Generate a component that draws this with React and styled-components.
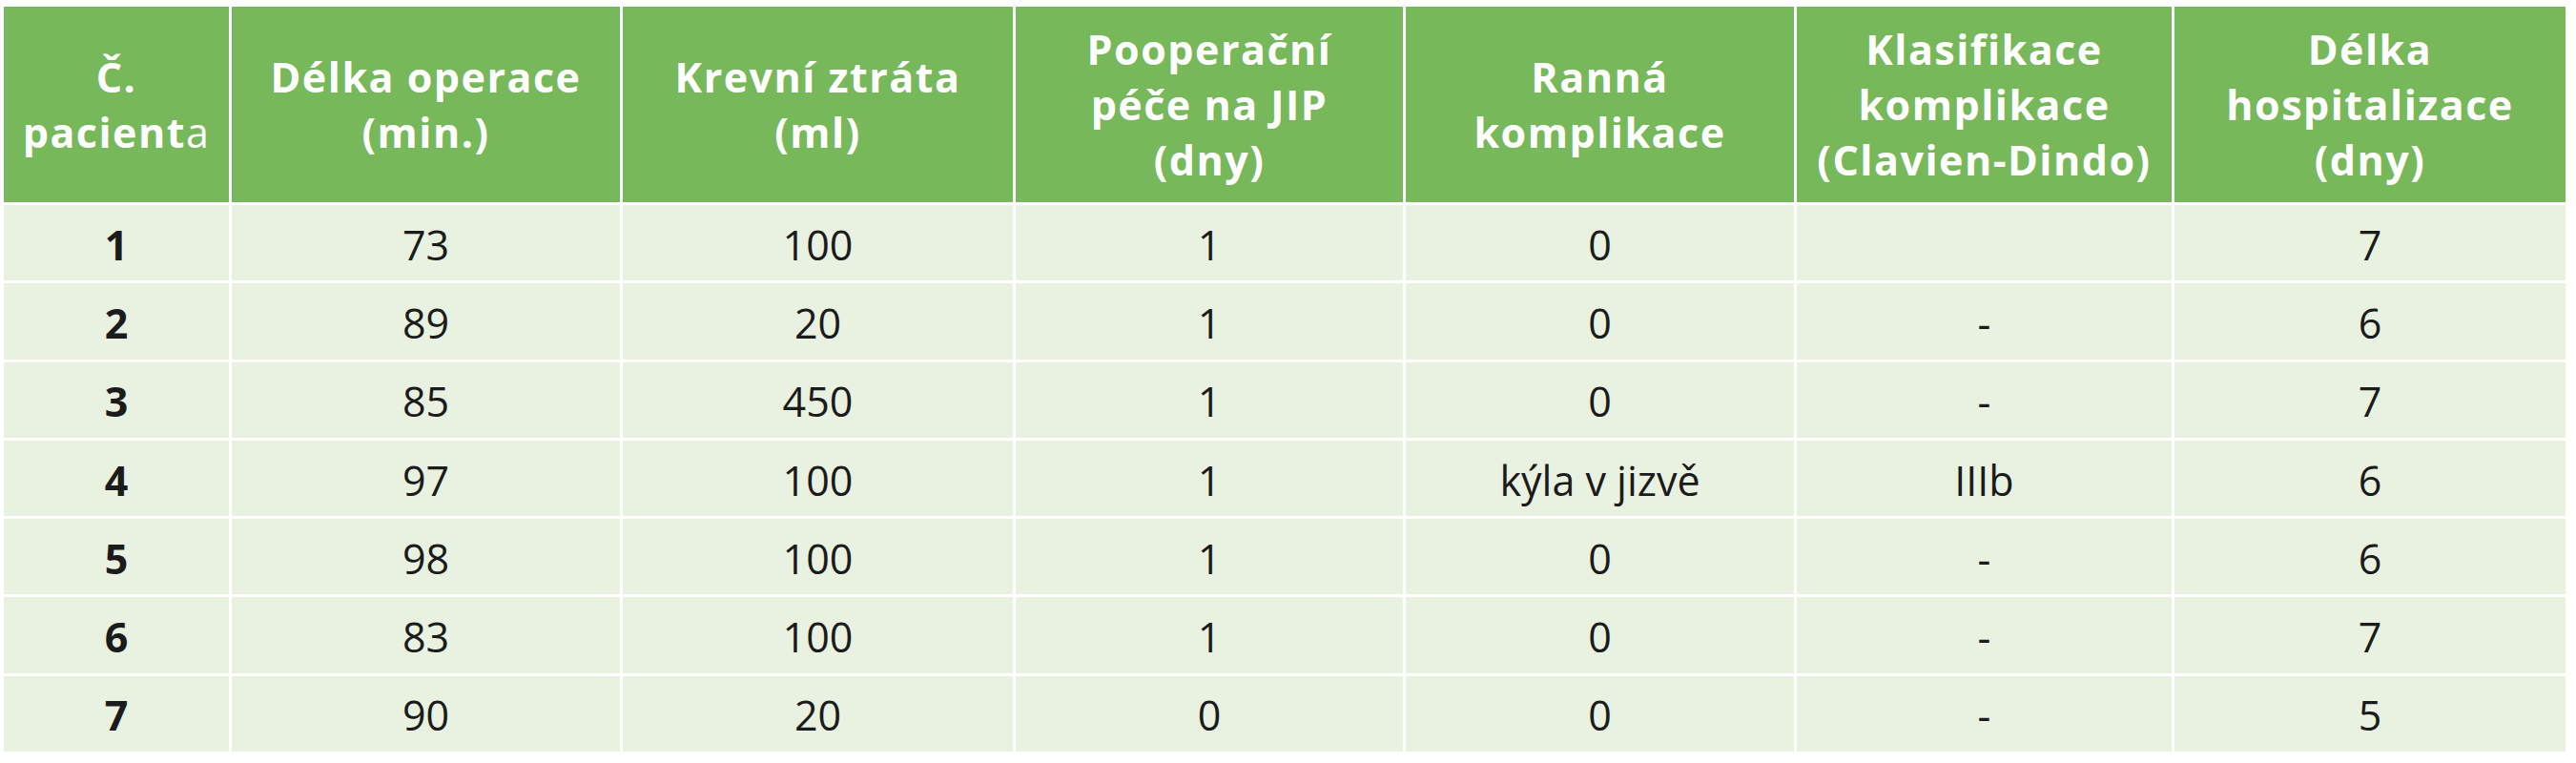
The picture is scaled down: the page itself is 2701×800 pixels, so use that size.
import React from 'react';
import styled, { createGlobalStyle } from 'styled-components';

const GlobalStyle = createGlobalStyle`
  body {
    margin: 0;
    background: #ffffff;
    font-family: "Open Sans", "Noto Sans", sans-serif;
  }
`;

const Page = styled.div`
  padding: 7px 11px 0 4px;
`;

const Table = styled.div`
  display: grid;
  grid-template-columns: 236px 407px 409px 406px 407px 393px 410px;
  grid-template-rows: 205px;
  grid-auto-rows: 79.3px;
  gap: 3px;
  background: #ffffff;
`;

const HeadCell = styled.div`
  background: #77b85b;
  color: #ffffff;
  font-weight: 700;
  font-size: 43px;
  letter-spacing: 1.5px;
  line-height: 58px;
  text-align: center;
  display: flex;
  align-items: center;
  justify-content: center;
`;

const Light = styled.span`
  font-weight: 400;
`;

const Cell = styled.div`
  background: #e9f2e1;
  color: #1b1b1b;
  font-size: 43px;
  font-weight: ${(p) => (p.$bold ? 700 : 400)};
  display: flex;
  align-items: center;
  justify-content: center;
  padding-top: 3px;
  white-space: nowrap;
`;

const headers = [
  [<>Č.</>, <>pacient<Light>a</Light></>],
  ['Délka operace', '(min.)'],
  ['Krevní ztráta', '(ml)'],
  ['Pooperační', 'péče na JIP', '(dny)'],
  ['Ranná', 'komplikace'],
  ['Klasifikace', 'komplikace', '(Clavien-Dindo)'],
  ['Délka', 'hospitalizace', '(dny)'],
];

const rows = [
  ['1', '73', '100', '1', '0', '', '7'],
  ['2', '89', '20', '1', '0', '-', '6'],
  ['3', '85', '450', '1', '0', '-', '7'],
  ['4', '97', '100', '1', 'kýla v jizvě', 'IIIb', '6'],
  ['5', '98', '100', '1', '0', '-', '6'],
  ['6', '83', '100', '1', '0', '-', '7'],
  ['7', '90', '20', '0', '0', '-', '5'],
];

export default function App() {
  return (
    <Page>
      <GlobalStyle />
      <Table>
        {headers.map((lines, i) => (
          <HeadCell key={'h' + i}>
            <div>
              {lines.map((line, j) => (
                <div key={j}>{line}</div>
              ))}
            </div>
          </HeadCell>
        ))}
        {rows.map((row, r) =>
          row.map((value, c) => (
            <Cell key={r + '-' + c} $bold={c === 0}>
              {value}
            </Cell>
          ))
        )}
      </Table>
    </Page>
  );
}
